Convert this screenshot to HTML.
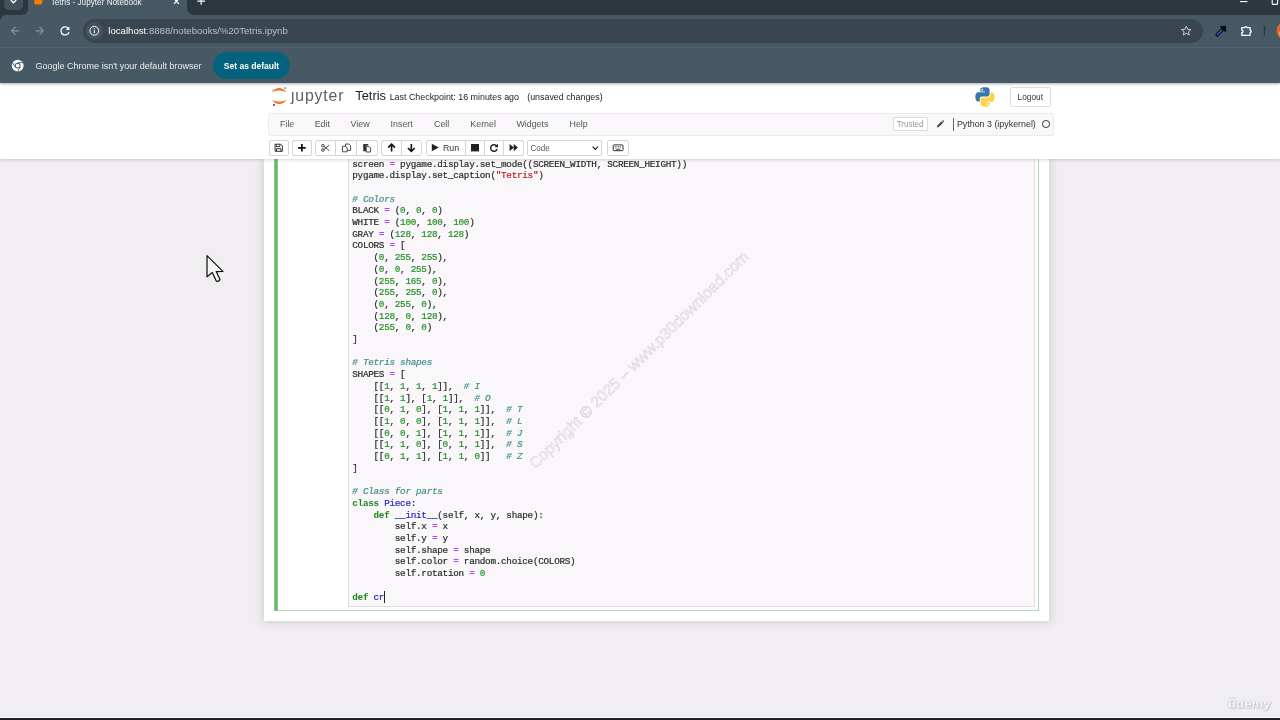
<!DOCTYPE html>
<html>
<head>
<meta charset="utf-8">
<title>Tetris - Jupyter Notebook</title>
<style>
*{box-sizing:border-box;margin:0;padding:0}
html,body{width:1280px;height:720px;overflow:hidden}
body{position:relative;background:#f0eef1;font-family:"Liberation Sans",sans-serif;color:#333}
.abs{position:absolute}
#root{position:absolute;left:0;top:0;width:1280px;height:720px;overflow:hidden;will-change:transform}
/* ---------- browser chrome ---------- */
#tabstrip{left:0;top:0;width:1280px;height:15px;background:#475965}
#toolbar{left:0;top:15px;width:1280px;height:32px;background:#475965}
#tab{left:27px;top:0;width:161px;height:15px;background:#475965}
#tabdd{left:4px;top:-8px;width:19px;height:18.2px;border-radius:5px;background:#42525c}
#tabcurveL{left:0;top:-10px;width:27.6px;height:24.7px;background:#2d383e;border-radius:0 0 6px 0}
#tabcurveR{left:187px;top:3px;width:12px;height:12px;background:#2d383e;border-radius:0 0 0 7px}
#omni{left:83px;top:19px;width:1120px;height:24px;border-radius:12px;background:#39464f}
#sepline{left:0;top:46.5px;width:1280px;height:1px;background:#526370}
#infobar{left:0;top:47.5px;width:1280px;height:35.5px;background:#475965;box-shadow:0 0.5px 2.5px rgba(40,50,60,.4)}
.ctext{color:#e9edf0;white-space:nowrap}
#setdef{left:213px;top:52px;width:77px;height:27px;border-radius:14px;background:#05627c}
/* ---------- jupyter ---------- */
#header{left:0;top:83px;width:1280px;height:76px;background:#fff;box-shadow:0 1px 3px rgba(87,87,87,.25)}
#menubar{left:268px;top:113px;width:786px;height:23px;background:#f9f7fa;border:1px solid #eceaed;border-radius:1.5px}
.menu{transform:scaleY(1.1);transform-origin:0 78%;top:119px;font-size:8.9px;color:#555;white-space:nowrap;line-height:11px}
.btn{top:140px;height:16px;background:#fff;border:1px solid #d4d4d4;border-radius:2px}
.btn i{position:absolute;top:0;bottom:0;width:1px;background:#d4d4d4}
#nbwrap{left:264px;top:159px;width:785px;height:462px;background:#fff;box-shadow:0 0 8px 1px rgba(87,87,87,.22)}
#cell{left:275px;top:150px;width:764px;height:461px;border:1px solid #b4d9ba;border-left:0;background:#fff}
#input{left:348px;top:150px;width:687px;height:457px;background:#f9f7fa;border:1px solid #dedcdf;border-radius:1px}
#code{left:352.3px;top:158.5px;font-family:"Liberation Mono",monospace;font-size:9.3px;letter-spacing:-0.267px;line-height:11.71px;color:#2b2b2b;white-space:pre;-webkit-text-stroke:0.2px currentColor}
.k{color:#1c861c;font-weight:bold;-webkit-text-stroke:0}
.n{color:#239023}
.s{color:#ba2121}
.c{color:#3f8f8f;font-style:italic}
.o{color:#b445fb;font-weight:bold;-webkit-text-stroke:0}
.d{color:#2323c8}
#wm{left:639px;top:360px;width:0;height:0}
#wm span{position:absolute;left:-160px;top:-10px;width:320px;text-align:center;transform:rotate(-44.7deg);font-size:15.5px;line-height:20px;color:#f9f7fa;-webkit-text-stroke:0.5px #d2d0d4;white-space:nowrap;letter-spacing:0}
</style>
</head>
<body>
<div id="root">
<!-- notebook page -->
<div id="nbwrap" class="abs"></div>
<div id="cell" class="abs"></div>
<svg class="abs" style="left:270px;top:150px" width="12" height="464" viewBox="270 150 12 464"><rect x="274.25" y="150" width="3.5" height="460.7" fill="#62b868"/></svg>
<div id="input" class="abs"></div>
<div id="wm" class="abs"><span>Copyright © 2025 – www.p30download.com</span></div>
<pre id="code" class="abs">screen <span class="o">=</span> pygame.display.set_mode((SCREEN_WIDTH, SCREEN_HEIGHT))
pygame.display.set_caption(<span class="s">"Tetris"</span>)

<span class="c"># Colors</span>
BLACK <span class="o">=</span> (<span class="n">0</span>, <span class="n">0</span>, <span class="n">0</span>)
WHITE <span class="o">=</span> (<span class="n">100</span>, <span class="n">100</span>, <span class="n">100</span>)
GRAY <span class="o">=</span> (<span class="n">128</span>, <span class="n">128</span>, <span class="n">128</span>)
COLORS <span class="o">=</span> [
    (<span class="n">0</span>, <span class="n">255</span>, <span class="n">255</span>),
    (<span class="n">0</span>, <span class="n">0</span>, <span class="n">255</span>),
    (<span class="n">255</span>, <span class="n">165</span>, <span class="n">0</span>),
    (<span class="n">255</span>, <span class="n">255</span>, <span class="n">0</span>),
    (<span class="n">0</span>, <span class="n">255</span>, <span class="n">0</span>),
    (<span class="n">128</span>, <span class="n">0</span>, <span class="n">128</span>),
    (<span class="n">255</span>, <span class="n">0</span>, <span class="n">0</span>)
]

<span class="c"># Tetris shapes</span>
SHAPES <span class="o">=</span> [
    [[<span class="n">1</span>, <span class="n">1</span>, <span class="n">1</span>, <span class="n">1</span>]],  <span class="c"># I</span>
    [[<span class="n">1</span>, <span class="n">1</span>], [<span class="n">1</span>, <span class="n">1</span>]],  <span class="c"># O</span>
    [[<span class="n">0</span>, <span class="n">1</span>, <span class="n">0</span>], [<span class="n">1</span>, <span class="n">1</span>, <span class="n">1</span>]],  <span class="c"># T</span>
    [[<span class="n">1</span>, <span class="n">0</span>, <span class="n">0</span>], [<span class="n">1</span>, <span class="n">1</span>, <span class="n">1</span>]],  <span class="c"># L</span>
    [[<span class="n">0</span>, <span class="n">0</span>, <span class="n">1</span>], [<span class="n">1</span>, <span class="n">1</span>, <span class="n">1</span>]],  <span class="c"># J</span>
    [[<span class="n">1</span>, <span class="n">1</span>, <span class="n">0</span>], [<span class="n">0</span>, <span class="n">1</span>, <span class="n">1</span>]],  <span class="c"># S</span>
    [[<span class="n">0</span>, <span class="n">1</span>, <span class="n">1</span>], [<span class="n">1</span>, <span class="n">1</span>, <span class="n">0</span>]]   <span class="c"># Z</span>
]

<span class="c"># Class for parts</span>
<span class="k">class</span> <span class="d">Piece</span>:
    <span class="k">def</span> <span class="d">__init__</span>(self, x, y, shape):
        self.x <span class="o">=</span> x
        self.y <span class="o">=</span> y
        self.shape <span class="o">=</span> shape
        self.color <span class="o">=</span> random.choice(COLORS)
        self.rotation <span class="o">=</span> <span class="n">0</span>

<span class="k">def</span> <span class="d">cr</span></pre>
<div class="abs" style="left:384.2px;top:591px;width:1px;height:11.6px;background:#222"></div>

<!-- jupyter header -->
<div id="header" class="abs"></div>
<div id="menubar" class="abs"></div>


<!-- jupyter header content -->
<svg class="abs" style="left:268px;top:84px" width="24" height="26" viewBox="268 84 24 26">
 <path d="M272.1 92.6 C274.4 86.6 283.8 86.6 286.2 92.6 C283 89.8 275.2 89.8 272.1 92.6Z" fill="#f37726"/>
 <path d="M272.4 99.4 C274.6 105.4 283.9 105.4 286.3 99.4 C283.2 102.1 275.4 102.1 272.4 99.4Z" fill="#f37726"/>
 <circle cx="285.1" cy="88.1" r="0.85" fill="#6f6f70"/>
 <circle cx="274" cy="104.9" r="1.2" fill="#6f6f70"/>
 <circle cx="272.9" cy="89.6" r="0.6" fill="#8e8e8f"/>
</svg>
<div class="abs" style="left:290.9px;top:86.9px;font-size:15.8px;line-height:18px;color:#5e5e5e;letter-spacing:0.85px;white-space:nowrap">jupyter</div>
<div class="abs" style="left:289.5px;top:86px;width:4.6px;height:5.2px;background:#fff"></div>
<div class="abs" style="left:355.2px;top:88.2px;font-size:12.9px;line-height:16px;color:#222;white-space:nowrap">Tetris</div>
<div class="abs" style="left:389.7px;top:92px;transform:scaleY(1.1);transform-origin:0 78%;font-size:8.9px;line-height:11px;color:#222;white-space:nowrap">Last Checkpoint: 16 minutes ago</div>
<div class="abs" style="left:527.2px;top:92px;transform:scaleY(1.1);transform-origin:0 78%;font-size:8.9px;line-height:11px;color:#222;white-space:nowrap">(unsaved changes)</div>
<!-- python logo -->
<svg class="abs" style="left:975px;top:87px" width="20" height="20" viewBox="0 0 110 110">
 <path d="M54 2c-26 0-25 11-25 11v12h26v4H19S2 27 2 54s15 26 15 26h9V67s-1-15 15-15h25s14 0 14-14V15S82 2 54 2zM40 10a4.700000000000001 4.700000000000001 0 1 1 0 9.4 4.700000000000001 4.700000000000001 0 0 1 0-9.4z" fill="#3877ab"/>
 <path d="M56 108c26 0 25-11 25-11V85H55v-4h36s17 2 17-25-15-26-15-26h-9v13s1 15-15 15H44s-14 0-14 14v23s-2 13 26 13zm14-8a4.700000000000001 4.700000000000001 0 1 1 0-9.4 4.700000000000001 4.700000000000001 0 0 1 0 9.4z" fill="#fbd449"/>
</svg>
<div class="abs" style="left:1010px;top:86.7px;width:40.6px;height:20.5px;border:1px solid #dedede;border-radius:1.5px;background:#fff"></div>
<div class="abs" style="left:1010px;top:92px;width:40.6px;text-align:center;transform:scaleY(1.1);transform-origin:0 78%;font-size:8.3px;line-height:10px;color:#333">Logout</div>
<!-- menus -->
<div class="abs menu" style="left:280px">File</div>
<div class="abs menu" style="left:314.7px">Edit</div>
<div class="abs menu" style="left:350.6px">View</div>
<div class="abs menu" style="left:390.6px">Insert</div>
<div class="abs menu" style="left:434px">Cell</div>
<div class="abs menu" style="left:470.3px">Kernel</div>
<div class="abs menu" style="left:516.4px">Widgets</div>
<div class="abs menu" style="left:569.5px">Help</div>
<!-- right of menubar -->
<div class="abs" style="left:892.5px;top:117px;width:35.2px;height:14.2px;border:1px solid #dcdcdc;background:#fff;border-radius:1px"></div>
<div class="abs" style="left:892.5px;top:119.7px;width:35.2px;text-align:center;transform:scaleY(1.1);transform-origin:0 78%;font-size:8px;line-height:10px;color:#999">Trusted</div>
<svg class="abs" style="left:935.8px;top:120.3px" width="8.4" height="8.4" viewBox="0 0 10 10"><path d="M1 9 L1.6 6.6 L6.6 1.6 L8.4 3.4 L3.4 8.4 Z M7.2 1 L7.9 0.4 Q8.4 0 8.9 0.5 L9.5 1.1 Q10 1.6 9.5 2.1 L8.9 2.8 Z" fill="#444"/></svg>
<div class="abs" style="left:952.8px;top:117.8px;width:0.9px;height:13.4px;background:#666"></div>
<div class="abs" style="left:956.9px;top:119px;transform:scaleY(1.1);transform-origin:0 78%;font-size:8.9px;line-height:11px;color:#333;white-space:nowrap">Python 3 (ipykernel)</div>
<div class="abs" style="left:1042.3px;top:120.3px;width:7.6px;height:7.6px;border:1.1px solid #333;border-radius:50%"></div>
<!-- toolbar buttons -->
<div class="abs btn" style="left:269px;width:20px"></div>
<div class="abs btn" style="left:292px;width:20px"></div>
<div class="abs btn" style="left:315px;width:63px"><i style="left:19px"></i><i style="left:40px"></i></div>
<div class="abs btn" style="left:381px;width:41px"><i style="left:19px"></i></div>
<div class="abs btn" style="left:426px;width:98px"><i style="left:38px"></i><i style="left:57px"></i><i style="left:76px"></i></div>
<div class="abs btn" style="left:527px;width:75px;border-radius:2px"></div>
<div class="abs btn" style="left:607px;width:22px"></div>
<div class="abs" style="left:442.9px;top:142.6px;transform:scaleY(1.1);transform-origin:0 78%;font-size:8.8px;line-height:11px;color:#333">Run</div>
<div class="abs" style="left:530.6px;top:144.1px;transform:scaleY(1.1);transform-origin:0 78%;font-size:8px;line-height:10px;color:#555">Code</div>
<svg class="abs" style="left:264px;top:138px" width="380" height="20" viewBox="264 138 380 20">
 <!-- save -->
 <path d="M275.1 144.2 h5.6 l1.7 1.7 v5.4 h-7.3z M276.3 144.2 v2.4 h3.6 v-2.4 M276.5 151.3 v-2.6 h4.4 v2.6" fill="none" stroke="#333" stroke-width="1"/>
 <!-- plus -->
 <path d="M301.9 144 v7.6 M298.1 147.8 h7.6" stroke="#111" stroke-width="1.7" fill="none"/>
 <!-- scissors -->
 <g stroke="#333" stroke-width="0.9" fill="none"><circle cx="322.9" cy="145.6" r="1.3"/><circle cx="322.9" cy="150" r="1.3"/><path d="M324 146.3 L329.3 150.6 M324 149.3 L329.3 145"/></g>
 <!-- copy -->
 <g stroke="#333" stroke-width="0.9" fill="#fff"><path d="M345.6 144 h3.2 l1.8 1.8 v4.6 h-5z"/><path d="M342.4 146.2 h3 l1.8 1.8 v3.8 h-4.8z"/></g>
 <!-- paste -->
 <g><path d="M363.2 144 h5 v1.6 h-2 v5.6 h-3z" fill="#333"/><path d="M366.2 146.4 h2.8 l1.6 1.6 v4 h-4.4z" fill="#fff" stroke="#333" stroke-width="0.9"/></g>
 <!-- up -->
 <path d="M391.6 151.6 v-7 M388.2 147.6 l3.4 -3.4 l3.4 3.4" stroke="#111" stroke-width="1.6" fill="none"/>
 <!-- down -->
 <path d="M411.3 144 v7 M407.9 148 l3.4 3.4 l3.4 -3.4" stroke="#111" stroke-width="1.6" fill="none"/>
 <!-- play -->
 <path d="M431.8 143.7 L438.8 147.5 L431.8 151.3z" fill="#222"/>
 <!-- stop -->
 <rect x="471" y="144" width="8" height="7.4" fill="#222"/>
 <!-- repeat -->
 <path d="M496.7 146.2 A3.3 3.3 0 1 0 497.1 149" stroke="#222" stroke-width="1.5" fill="none"/>
 <path d="M498 143.8 v3.5 h-3.5z" fill="#222"/>
 <!-- fast forward -->
 <path d="M509.6 143.9 L513.8 147.6 L509.6 151.3z M513.7 143.9 L517.9 147.6 L513.7 151.3z" fill="#222"/>
 <!-- select chevron -->
 <path d="M592.6 146.7 l2.7 2.7 l2.7 -2.7" stroke="#222" stroke-width="1.2" fill="none"/>
 <!-- keyboard -->
 <rect x="613.2" y="144.9" width="9.8" height="5.8" rx="0.8" fill="none" stroke="#333" stroke-width="1"/>
 <path d="M614.8 146.6 h6.6 M614.8 148 h6.6" stroke="#333" stroke-width="0.7" stroke-dasharray="1 0.7"/><path d="M616 149.5 h4.2" stroke="#333" stroke-width="0.7"/>
</svg>

<!-- browser chrome -->
<div id="tabstrip" class="abs"></div>
<div id="toolbar" class="abs"></div>
<div id="infobar" class="abs"></div>
<div id="sepline" class="abs"></div>
<div id="omni" class="abs"></div>
<div id="setdef" class="abs"></div>


<!-- chrome details -->
<div id="tabcurveL" class="abs"></div>
<div class="abs" style="left:0;top:14.7px;width:6px;height:6px;background:radial-gradient(circle at 100% 100%,#475965 5.4px,#2d383e 6.2px)"></div>
<div id="tabdd" class="abs"></div>
<div id="tabcurveR" class="abs" style="left:187.4px;top:-10px;width:1100px;height:24.8px;border-radius:0 0 0 7px"></div>
<svg class="abs" style="left:0;top:0" width="1280" height="48" viewBox="0 0 1280 48">
 <!-- tab dropdown chevron -->
 <path d="M10.8 0.1 l2.7 2.7 l2.7 -2.7" stroke="#fff" stroke-width="1.4" fill="none"/>
 <!-- favicon -->
 <path d="M34.2 0 h8.6 l-1.2 4.6 h-7.2z" fill="#f57c00"/>
 <!-- tab close -->
 <path d="M173.9 -1.2 l5 5 M178.9 -1.2 l-5 5" stroke="#fff" stroke-width="1.15"/>
 <!-- new tab -->
 <path d="M201.2 -2 v6.7 M197.4 1.2 h7.6" stroke="#fff" stroke-width="1.25"/>
 <!-- minimize / restore -->
 <path d="M1240 1.6 h7.4" stroke="#fff" stroke-width="1.1"/>
 <path d="M1272.2 -1 v4.4 q0 1 1 1 h3.4 q1 0 1 -1 v-4.4" stroke="#fff" stroke-width="1.1" fill="none"/>
 <!-- back -->
 <path d="M19.3 30.8 h-7.6 M15.4 27 l-3.8 3.8 l3.8 3.8" stroke="#8694a0" stroke-width="1.2" fill="none"/>
 <!-- forward -->
 <path d="M35.7 30.8 h7.6 M39.6 27 l3.8 3.8 l-3.8 3.8" stroke="#8694a0" stroke-width="1.2" fill="none"/>
 <!-- reload -->
 <path d="M68.6 28.7 A4.1 4.1 0 1 0 69 32.2" stroke="#fff" stroke-width="1.25" fill="none"/>
 <path d="M69.4 26.4 v3.5 h-3.5z" fill="#fff"/>
 <!-- site info -->
 <circle cx="94.3" cy="30.8" r="8.6" fill="#46545e"/>
 <circle cx="94.3" cy="30.8" r="4.4" stroke="#fff" stroke-width="1" fill="none"/>
 <path d="M94.3 30.2 v3 M94.3 28.3 v1" stroke="#fff" stroke-width="1"/>
 <!-- star -->
 <path d="M1186.3 25.8 l1.5 3.3 l3.6 0.35 l-2.7 2.4 l0.8 3.55 l-3.2 -1.9 l-3.2 1.9 l0.8 -3.55 l-2.7 -2.4 l3.6 -0.35z" stroke="#d5dce0" stroke-width="1" fill="none" stroke-linejoin="round" transform="translate(1186.3 30.8) scale(0.92) translate(-1186.3 -30.8)"/>
 <!-- eyedropper -->
 <path d="M1217.3 34.7 l5.2 -5.2" stroke="#0b0b14" stroke-width="3.7" stroke-linecap="round"/>
 <path d="M1217.5 34.5 l3.9 -3.9" stroke="#3b52d0" stroke-width="1.7" stroke-linecap="round"/>
 <path d="M1221.4 26.8 l3.9 3.9" stroke="#0b0b14" stroke-width="2.3" stroke-linecap="round"/>
 <circle cx="1224.3" cy="27.7" r="2.1" fill="#0b0b14"/>
 <!-- extensions -->
 <path d="M1241.8 27.6 h3.1 a1.1 1.1 0 0 1 2.2 0 h3 v2.7 a1.1 1.1 0 0 1 0 2.2 v2.8 h-8.3 v-2.6 a1.25 1.25 0 0 0 0 -2.5z" stroke="#fff" stroke-width="1.25" fill="none" stroke-linejoin="round"/>
 <!-- separator -->
 <path d="M1264.4 25.6 v10.2" stroke="#2c3941" stroke-width="1.3"/>
 <!-- avatar -->
 <circle cx="1286" cy="30.8" r="9.5" fill="#e0642c"/>
 <circle cx="1284.3" cy="33.5" r="5" fill="#d8c7c0"/>
</svg>
<div class="abs ctext" style="left:50.7px;top:-2.9px;font-size:8.2px;line-height:12px;color:#f0f3f5">Tetris - Jupyter Notebook</div>
<div class="abs ctext" style="left:108.3px;top:24.7px;font-size:9.62px;line-height:12px;color:#b7c1c8"><span style="color:#fff">localhost</span>:8888/notebooks/%20Tetris.ipynb</div>
<!-- infobar -->
<svg class="abs" style="left:10px;top:58px" width="16" height="16" viewBox="0 0 16 16">
 <circle cx="7.7" cy="7.6" r="5.9" fill="#fff"/>
 <circle cx="7.7" cy="7.6" r="2.9" fill="#475965"/>
 <circle cx="7.7" cy="7.6" r="1.9" fill="#fff"/>
 <path d="M7.7 4.7 h5.2 M5.2 9.1 l-2.6 -4.4 M10.2 9.1 l-2.6 4.4" stroke="#475965" stroke-width="0.9"/>
</svg>
<div class="abs ctext" style="left:35.6px;top:59.9px;font-size:9px;line-height:12px">Google Chrome isn't your default browser</div>
<div class="abs ctext" style="left:213px;top:59.8px;width:77px;text-align:center;font-size:8.5px;line-height:12px;font-weight:bold;color:#fff">Set as default</div>

<!-- udemy watermark -->
<div class="abs" style="left:1228px;top:695.2px;will-change:transform;transform:scaleY(0.84);transform-origin:0 100%;font-size:13.3px;line-height:16px;font-weight:bold;letter-spacing:-0.05px;color:#fbfbfc;text-shadow:0 0 1.5px rgba(120,118,124,.55),0.5px 0.8px 1.5px rgba(120,118,124,.45);white-space:nowrap">udemy</div>
<svg class="abs" style="left:1226px;top:694.6px" width="14" height="8" viewBox="0 0 14 8"><path d="M3.2 5.8 L6.3 3.7 L9.4 5.8" stroke="#fbfbfc" stroke-width="1.3" fill="none" style="filter:drop-shadow(0 0 0.8px rgba(120,118,124,.7))"/></svg>
<!-- mouse cursor -->
<svg class="abs" style="left:200px;top:250px" width="30" height="36" viewBox="200 250 30 36">
 <path d="M207 255.6 L207 276.8 L212.3 272.6 L216.4 281.2 Q218.6 282 220 279.6 L216.2 271.6 L222.9 271.4 Z" fill="#f5f3f6" stroke="#141414" stroke-width="1.25" stroke-linejoin="round"/>
</svg>
<!-- bottom bar -->
<div class="abs" style="left:0;top:717.2px;width:1280px;height:1px;background:#fbfafc"></div>
<div class="abs" style="left:0;top:718.3px;width:1280px;height:2px;background:#232326"></div>
</div>
</body>
</html>
